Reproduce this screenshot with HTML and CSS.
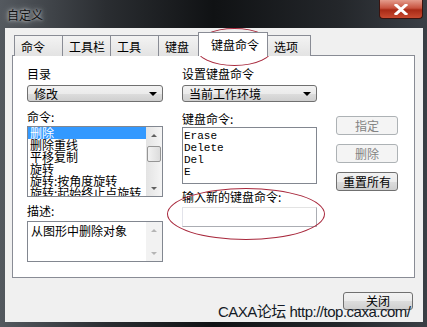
FILE: index.html
```html
<!DOCTYPE html>
<html lang="zh-CN">
<head>
    <meta charset="UTF-8">
    <title>自定义</title>
    <link rel="stylesheet" href="styles.css">
</head>
<body>
<div class="window">
    <div class="titlebar">
        <span class="title">自定义</span>
        <div class="close-x">
            <svg width="14" height="11" viewBox="0 0 14 11">
                <path d="M2 1 L12 10 M12 1 L2 10" stroke="#fff" stroke-width="3" stroke-linecap="square"/>
            </svg>
        </div>
    </div>

    <div class="client">
        <div class="tabs">
            <div class="tab w48">命令</div>
            <div class="tab w48">工具栏</div>
            <div class="tab w48">工具</div>
            <div class="tab w41">键盘</div>
            <div class="tab active">键盘命令</div>
            <div class="tab w44">选项</div>
        </div>

        <div class="panel">
            <div class="col">
                <div class="label">目录</div>
                <div class="combo first"><span>修改</span><i class="arrow"></i></div>
                <div class="label gap8">命令:</div>
                <div class="listbox cmd-list">
                    <ul class="items">
                        <li class="selected">删除</li>
                        <li>删除重线</li>
                        <li>平移复制</li>
                        <li>旋转</li>
                        <li>旋转:按角度旋转</li>
                        <li>旋转:起始终止点旋转</li>
                    </ul>
                    <div class="scrollbar">
                        <div class="sb-btn"><i class="up"></i></div>
                        <div class="sb-track"><div class="thumb"></div></div>
                        <div class="sb-btn"><i class="down"></i></div>
                    </div>
                </div>
                <div class="label gap7">描述:</div>
                <div class="listbox desc">
                    <div class="items desc-text">从图形中删除对象</div>
                    <div class="scrollbar off">
                        <div class="sb-btn"><i class="up"></i></div>
                        <div class="sb-track"></div>
                        <div class="sb-btn"><i class="down"></i></div>
                    </div>
                </div>
            </div>

            <div class="col">
                <div class="label">设置键盘命令</div>
                <div class="combo first"><span>当前工作环境</span><i class="arrow"></i></div>
                <div class="label gap10">键盘命令:</div>
                <div class="listbox key-list">
                    <ul class="items mono">
                        <li>Erase</li>
                        <li>Delete</li>
                        <li>Del</li>
                        <li>E</li>
                    </ul>
                </div>
                <div class="label gap6">输入新的键盘命令:</div>
                <div class="textbox"></div>
            </div>

            <div class="col actions">
                <div class="btn disabled">指定</div>
                <div class="btn disabled">删除</div>
                <div class="btn">重置所有</div>
            </div>
        </div>

        <div class="footer">
            <div class="btn close-btn">关闭</div>
        </div>
    </div>

    <!-- red marks drawn over the screenshot -->
    <div class="mark mark-tab"></div>
    <div class="mark mark-input"></div>
    <div class="watermark">CAXA论坛 http://top.caxa.com/</div>
</div>
</body>
</html>
```

FILE: styles.css
```css
body {
    margin: 0;
    background: #1b1d20;
    font-family: "Noto Sans CJK SC", "Liberation Sans", sans-serif;
    font-size: 12px;
    color: #000;
}
.window {
    position: relative;
    width: 427px;
    height: 327px;
    overflow: hidden;
    background: linear-gradient(90deg, #54595f 0%, #2a2d31 25%, #101214 50%, #24272b 80%, #3a3f45 100%);
}
.titlebar {
    height: 28px;
    display: flex;
    justify-content: space-between;
    align-items: flex-start;
}
.title {
    margin: 7px 0 0 7px;
    line-height: 16px;
    color: #111;
    text-shadow: 0 0 6px #c9cdd1, 0 0 3px #c9cdd1;
}
.close-x {
    width: 44px;
    height: 19px;
    margin-right: 4px;
    border: 1px solid #3a1410;
    border-top: none;
    border-radius: 0 0 4px 4px;
    background: linear-gradient(#e49c8c 0%, #c8533f 45%, #a82a16 55%, #c84a30 100%);
    display: flex;
    align-items: center;
    justify-content: center;
    box-sizing: border-box;
}

/* client area */
.client {
    margin: 0 4px 0 5px;
    height: 294px;
    background: #f0f0f0;
    padding-top: 5px;
    box-sizing: border-box;
}
.tabs {
    display: flex;
    align-items: flex-end;
    height: 23px;
    margin-left: 9px;
    margin-bottom: -1px;
    position: relative;
    z-index: 1;
}
.tab {
    height: 21px;
    line-height: 21px;
    padding-left: 6px;
    box-sizing: border-box;
    border: 1px solid #898c95;
    border-bottom: none;
    margin-right: -1px;
    background: linear-gradient(#f3f3f3, #e3e3e3);
    white-space: nowrap;
}
.w48 { width: 49px; }
.w41 { width: 42px; }
.w44 { width: 44px; }
.tab.active {
    width: 70px;
    height: 24px;
    padding-left: 12px;
    line-height: 23px;
    background: #fff;
    margin-left: -1px;
}
.panel {
    margin-left: 7px;
    width: 403px;
    height: 223px;
    box-sizing: border-box;
    border: 1px solid #898c95;
    background: #fff;
    padding: 11px 0 0 14px;
    display: grid;
    grid-template-columns: 136px 135px 62px;
    column-gap: 19px;
    align-items: start;
}
.col {
    display: flex;
    flex-direction: column;
}
.label {
    height: 14px;
    line-height: 14px;
    white-space: nowrap;
}
.gap6 { margin-top: 6px; }
.gap7 { margin-top: 7px; }
.gap8 { margin-top: 8px; }
.gap10 { margin-top: 10px; }

.combo {
    height: 17px;
    box-sizing: border-box;
    border: 1px solid #707070;
    border-radius: 3px;
    background: linear-gradient(#f2f2f2 0%, #ebebeb 50%, #dddddd 51%, #cfcfcf 100%);
    display: flex;
    align-items: center;
    justify-content: space-between;
    padding: 0 5px 0 6px;
    line-height: 15px;
}
.combo.first { margin-top: 4px; }
.arrow {
    width: 0;
    height: 0;
    border-left: 4px solid transparent;
    border-right: 4px solid transparent;
    border-top: 4px solid #000;
}

.listbox {
    border: 1px solid #828790;
    box-sizing: border-box;
    background: #fff;
    display: flex;
    overflow: hidden;
}
.cmd-list { height: 71px; margin-top: 2px; }
.desc { height: 41px; margin-top: 3px; }
.key-list { height: 57px; margin-top: 1px; }
.items {
    list-style: none;
    margin: 0;
    padding: 0;
    flex: 1;
    min-width: 0;
    overflow: hidden;
}
.items li {
    height: 12px;
    line-height: 12px;
    padding-left: 2px;
    white-space: nowrap;
}
.items li.selected {
    background: #3399ff;
    color: #fff;
}
.desc-text {
    padding: 2px 0 0 3px;
    line-height: 14px;
}
.mono {
    font-family: "Liberation Mono", "Courier New", monospace;
    font-size: 11px;
    padding-top: 2px;
}
.mono li { padding-left: 1px; }

.scrollbar {
    width: 16px;
    display: flex;
    flex-direction: column;
    background: linear-gradient(90deg, #e3e3e3, #f5f5f5);
}
.sb-btn {
    height: 16px;
    display: flex;
    align-items: center;
    justify-content: center;
}
.sb-track {
    flex: 1;
    padding-top: 3px;
}
.thumb {
    height: 16px;
    margin: 0 1px;
    border: 1px solid #959595;
    border-radius: 2px;
    background: linear-gradient(90deg, #f2f2f2, #dcdcdc);
    box-sizing: border-box;
}
.up, .down {
    width: 0;
    height: 0;
    border-left: 3px solid transparent;
    border-right: 3px solid transparent;
}
.up { border-bottom: 3px solid #606060; }
.down { border-top: 3px solid #606060; }
.off { background: #f2f2f2; }
.off .up { border-bottom-color: #b5b5b5; }
.off .down { border-top-color: #b5b5b5; }

.textbox {
    margin-top: 3px;
    height: 20px;
    box-sizing: border-box;
    border: 1px solid #abadb3;
    border-top-color: #e3e3e3;
    border-left-color: #e2e3ea;
    background: #fff;
}

.actions {
    padding-top: 49px;
    gap: 9px;
}
.btn {
    height: 19px;
    box-sizing: border-box;
    border: 1px solid #707070;
    border-radius: 3px;
    background: linear-gradient(#f2f2f2 0%, #ebebeb 50%, #dddddd 51%, #cfcfcf 100%);
    text-align: center;
    line-height: 17px;
}
.btn.disabled {
    border-color: #adb2b5;
    background: #f4f4f4;
    color: #838383;
}
.footer {
    display: flex;
    justify-content: flex-end;
    padding: 14px 10px 0 0;
}
.close-btn {
    width: 70px;
    height: 18px;
    line-height: 16px;
}

.mark {
    position: absolute;
    border: 1px solid #a8283c;
    border-radius: 50%;
    pointer-events: none;
}
.mark-tab {
    left: 195px;
    top: 28px;
    width: 77px;
    height: 36px;
}
.mark-input {
    left: 167px;
    top: 188px;
    width: 156px;
    height: 50px;
}
.watermark {
    position: absolute;
    left: 218px;
    top: 302px;
    font-family: "Liberation Sans", "Noto Sans CJK SC", sans-serif;
    font-size: 15px;
    letter-spacing: -0.5px;
    line-height: 20px;
    color: #141a26;
    white-space: nowrap;
}
```
